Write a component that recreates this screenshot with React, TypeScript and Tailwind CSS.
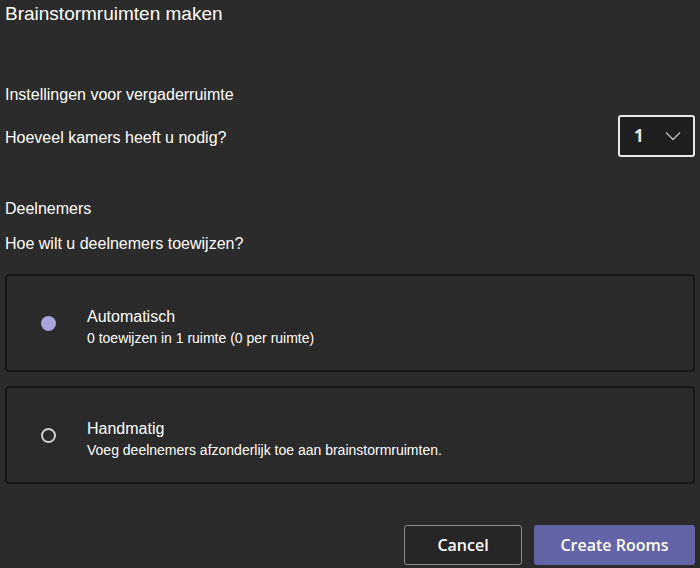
const OPTIONS = [
  { id: "auto", label: "Automatisch", desc: "0 toewijzen in 1 ruimte (0 per ruimte)" },
  { id: "manual", label: "Handmatig", desc: "Voeg deelnemers afzonderlijk toe aan brainstormruimten." },
];

import { useState } from "react";

export default function App() {
  const [mode, setMode] = useState("auto");

  return (
    <div
      className="h-[568px] w-[700px] bg-[#2b2b2b] text-white flex flex-col px-[5px] overflow-hidden"
      style={{ fontFamily: '"Liberation Sans", Arial, sans-serif' }}
    >
      <h1 className="text-[19px] leading-[24px] mt-[2px]">Brainstormruimten maken</h1>

      <div className="mt-[59px] text-[16px] leading-[20px]">Instellingen voor vergaderruimte</div>
      <div className="mt-[10px] flex items-center justify-between">
        <div className="text-[16px] leading-[20px] pt-[4px]">Hoeveel kamers heeft u nodig?</div>
        <button className="w-[77px] h-[42px] border-2 border-[#e8e8e8] rounded-[3px] bg-[#1f1f1f] flex items-center justify-between pl-[14px] pr-[12px]">
          <span className="text-[17px] font-bold text-[#e6e6e6]" style={{ fontFamily: '"Open Sans", sans-serif' }}>1</span>
          <svg width="16" height="10" viewBox="0 0 16 10" fill="none">
            <path d="M1 1.5L8 8.5L15 1.5" stroke="#bdbdbd" strokeWidth="1.3" />
          </svg>
        </button>
      </div>

      <div className="mt-[42px] text-[16px] leading-[20px]">Deelnemers</div>
      <div className="mt-[15px] text-[16px] leading-[20px]">Hoe wilt u deelnemers toewijzen?</div>

      <div className="mt-[20px] flex flex-col gap-[14px]">
        {OPTIONS.map((o) => (
          <button
            key={o.id}
            onClick={() => setMode(o.id)}
            className="h-[98px] w-[690px] border-2 border-[#171717] rounded-[4px] bg-[#2a2a2a] flex items-center text-left"
          >
            <div className="w-[80px] flex justify-center pl-[2px]">
              {mode === o.id ? (
                <span className="block w-[15px] h-[15px] rounded-full bg-[#a7a5dc]" />
              ) : (
                <span className="block w-[15px] h-[15px] rounded-full border-2 border-[#cfcfcf]" />
              )}
            </div>
            <div className="flex flex-col pt-[8px]">
              <span className="text-[16px] leading-[20px] text-white">{o.label}</span>
              <span className="text-[14px] leading-[20px] mt-[1px] text-white">{o.desc}</span>
            </div>
          </button>
        ))}
      </div>

      <div
        className="mt-auto mb-[3px] flex justify-end gap-[12px]"
        style={{ fontFamily: '"Open Sans", sans-serif' }}
      >
        <button className="w-[118px] h-[40px] border border-[#8c8c8c] rounded-[3px] bg-[#262626] text-[16px] font-semibold text-white">
          Cancel
        </button>
        <button className="w-[161px] h-[40px] rounded-[3px] bg-[#6264a7] text-[16px] font-semibold text-white">
          Create Rooms
        </button>
      </div>
    </div>
  );
}
